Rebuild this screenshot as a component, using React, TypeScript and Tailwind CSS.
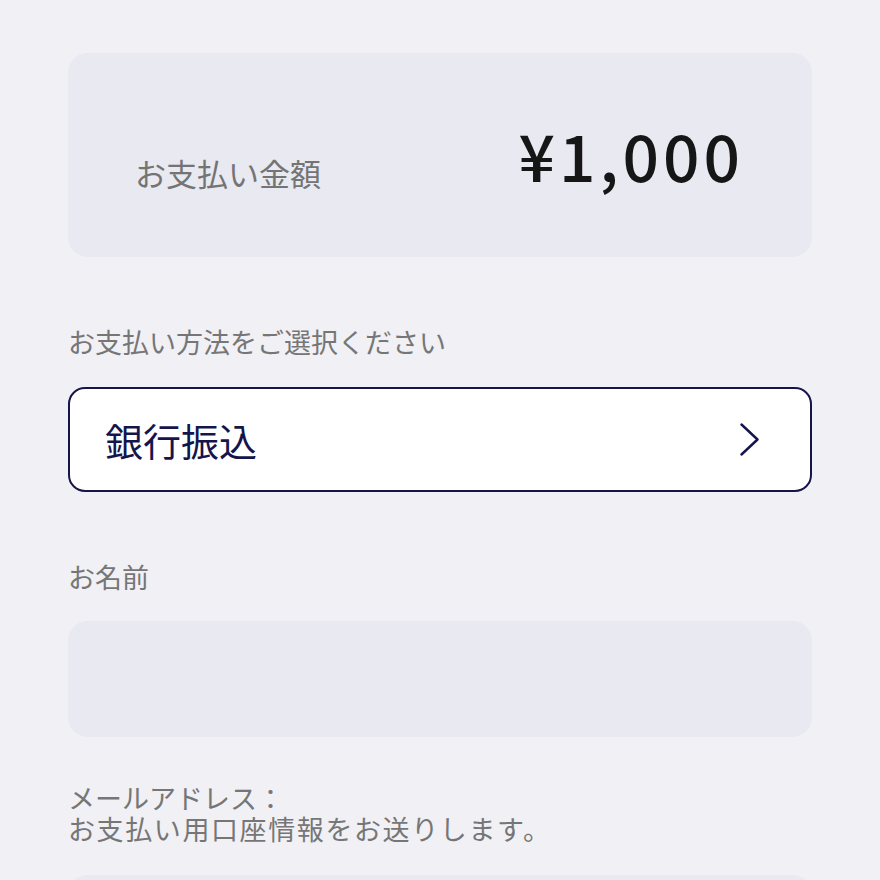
const font = { fontFamily: '"Noto Sans CJK JP", "Noto Sans", sans-serif' };

function FieldLabel({ children }: { children: React.ReactNode }) {
  return <p className="text-[27px] leading-[31px] text-[#767676]">{children}</p>;
}

export default function App() {
  return (
    <div
      className="min-h-screen bg-[#f0f0f5] px-[68px] pt-[53px] pb-10"
      style={font}
    >
      {/* amount */}
      <div className="flex h-[204px] items-end justify-between rounded-[20px] bg-[#e8e9f1] pb-[69px] pl-[67px] pr-[68px]">
        <span className="text-[31px] leading-none text-[#747474]">お支払い金額</span>
        <span className="mb-[2px] text-[64px] font-medium leading-none tracking-[4px] text-[#161616]">
          ¥1,000
        </span>
      </div>

      {/* payment method */}
      <div className="mt-[69px]">
        <FieldLabel>お支払い方法をご選択ください</FieldLabel>
        <button className="mt-[30px] flex h-[105px] w-full items-center justify-between rounded-[17px] border-2 border-[#15154d] bg-white pl-[35px] pr-[51px]">
          <span className="text-[38px] leading-none text-[#15154d]">銀行振込</span>
          <svg width="19" height="33" viewBox="0 0 19 33" fill="none">
            <path
              d="M1.5 1.5 L17.5 16.5 L1.5 31.5"
              stroke="#15154d"
              strokeWidth="2.4"
              strokeLinecap="round"
              strokeLinejoin="round"
            />
          </svg>
        </button>
      </div>

      {/* name */}
      <div className="mt-[69px]">
        <FieldLabel>お名前</FieldLabel>
        <div className="mt-[29px] h-[116px] rounded-[20px] bg-[#e8e9f1]" />
      </div>

      {/* email */}
      <div className="mt-[45px]">
        <FieldLabel>
          メールアドレス：
          <br />
          <span className="tracking-[1.6px]">お支払い用口座情報をお送りします。</span>
        </FieldLabel>
        <div className="mt-[31px] h-[116px] rounded-[20px] bg-[#e8e9f1]" />
      </div>
    </div>
  );
}
